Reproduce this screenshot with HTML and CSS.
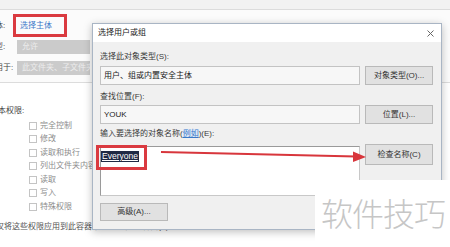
FILE: index.html
```html
<!DOCTYPE html>
<html lang="zh-CN">
<head>
    <meta charset="UTF-8">
    <meta name="viewport" content="width=device-width, initial-scale=1.0">
    <title>选择用户或组</title>
    <link rel="stylesheet" href="styles.css">
</head>
<body>
    <div class="page">
        <div class="topbar"></div>
        <div class="props">
            <div class="prop">
                <span class="prop-label">主体:</span>
                <a class="link">选择主体</a>
            </div>
            <div class="prop">
                <span class="prop-label">类型:</span>
                <span class="combo">允许</span>
            </div>
            <div class="prop">
                <span class="prop-label">应用于:</span>
                <span class="combo">此文件夹、子文件夹和文件</span>
            </div>
        </div>
        <div class="perms">
            <div class="perms-title">基本权限:</div>
            <ul class="checks">
                <li><span class="box"></span>完全控制</li>
                <li><span class="box"></span>修改</li>
                <li><span class="box"></span>读取和执行</li>
                <li><span class="box"></span>列出文件夹内容</li>
                <li><span class="box"></span>读取</li>
                <li><span class="box"></span>写入</li>
                <li><span class="box"></span>特殊权限</li>
            </ul>
            <div class="apply">仅将这些权限应用到此容器中的对象和/或容器(T)</div>
        </div>
    </div>

    <div class="dialog">
        <div class="dialog-title">
            <span>选择用户或组</span>
            <svg class="close" width="7" height="7" viewBox="0 0 7 7">
                <path d="M0.5 0.5 L6.5 6.5 M6.5 0.5 L0.5 6.5" stroke="#666" stroke-width="1"/>
            </svg>
        </div>
        <div class="dialog-body">
            <div class="field-label first">选择此对象类型(S):</div>
            <div class="field-row">
                <div class="field">用户、组或内置安全主体</div>
                <div class="btn">对象类型(O)...</div>
            </div>
            <div class="field-label second">查找位置(F):</div>
            <div class="field-row">
                <div class="field">YOUK</div>
                <div class="btn">位置(L)...</div>
            </div>
            <div class="field-label third">输入要选择的对象名称(<span class="example">例如</span>)(E):</div>
            <div class="field-row names-row">
                <div class="names"><span class="picked">Everyone</span></div>
                <div class="btn check-btn">检查名称(C)</div>
            </div>
            <div class="dialog-foot">
                <div class="btn advanced">高级(A)...</div>
            </div>
        </div>
    </div>

    <div class="mark">软件技巧</div>

    <div class="callout callout-link"></div>
    <div class="callout callout-name"></div>
    <svg class="arrow" width="450" height="247" viewBox="0 0 450 247">
        <path d="M161 152 L356 156.5" stroke="#d8363c" stroke-width="2.2" fill="none"/>
        <polygon points="353,151.5 366,157 353,162" fill="#d8363c"/>
    </svg>
</body>
</html>
```

FILE: styles.css
```css
html, body {
    margin: 0;
    padding: 0;
}
body {
    width: 450px;
    height: 247px;
    overflow: hidden;
    position: relative;
    background-color: #ffffff;
    font-family: "Liberation Sans", "Noto Sans CJK SC", sans-serif;
    font-size: 8px;
    line-height: 10px;
    color: #3a3a3a;
}

/* background window: advanced security settings */
.page {
    height: 247px;
}
.topbar {
    height: 9px;
    background-color: #f2f2f2;
    border-bottom: 1px solid #dcdcdc;
}
.props {
    display: flex;
    flex-direction: column;
    gap: 7px;
    padding: 9px 0 7px;
    margin-left: -13px;
    border-bottom: 1px solid #dcdcdc;
    background-color: #fbfbfb;
}
.prop {
    display: flex;
    align-items: center;
    height: 14px;
}
.prop-label {
    width: 30px;
    flex: none;
    color: #444;
    white-space: nowrap;
}
.link {
    color: #3b79c9;
    margin-left: 3px;
}
.combo {
    width: 73px;
    height: 14px;
    line-height: 14px;
    background-color: #cbcbcb;
    color: #ededed;
    padding-left: 5px;
    box-sizing: border-box;
    white-space: nowrap;
    overflow: hidden;
}
.perms {
    padding-top: 23px;
}
.perms-title {
    margin-left: -10px;
    color: #444;
}
.checks {
    list-style: none;
    margin: 3px 0 0;
    padding: 0 0 0 29px;
}
.checks li {
    display: flex;
    align-items: center;
    gap: 3px;
    height: 13.5px;
    color: #8c8c8c;
    white-space: nowrap;
}
.box {
    width: 6px;
    height: 6px;
    border: 1px solid #c4c4c4;
    background-color: #fff;
}
.apply {
    margin: 8px 0 0 -4px;
    color: #555;
    white-space: nowrap;
}

/* dialog window on top */
.dialog {
    position: absolute;
    left: 92px;
    top: 23px;
    width: 350px;
    height: 207px;
    box-sizing: border-box;
    border: 1px solid #a9b5c4;
    background-color: #f0f0f0;
    box-shadow: 0 2px 8px rgba(0,0,0,0.25);
    display: flex;
    flex-direction: column;
}
.dialog-title {
    height: 19px;
    background-color: #fff;
    display: flex;
    align-items: center;
    justify-content: space-between;
    padding: 0 7px 0 5px;
    color: #222;
}
.dialog-body {
    flex: 1;
    padding: 10px 8px 8px 7px;
    display: flex;
    flex-direction: column;
}
.field-label {
    height: 10px;
    white-space: nowrap;
}
.field-label.first { margin-bottom: 4px; }
.field-label.second { margin-top: 7px; margin-bottom: 3px; }
.field-label.third { margin-top: 5px; margin-bottom: 7px; }
.example {
    color: #3b79c9;
    background-color: #dce8f6;
    text-decoration: underline;
}
.field-row {
    display: flex;
    gap: 5px;
    height: 19px;
}
.field {
    flex: 1;
    box-sizing: border-box;
    border: 1px solid #c3c3c3;
    background-color: #f7f7f7;
    padding-left: 3px;
    line-height: 17px;
    color: #222;
}
.btn {
    width: 68px;
    flex: none;
    box-sizing: border-box;
    border: 1px solid #b9b9b9;
    background-color: #e1e1e1;
    text-align: center;
    line-height: 17px;
    color: #333;
    white-space: nowrap;
}
.names-row {
    height: 50px;
}
.names {
    flex: 1;
    box-sizing: border-box;
    border: 1px solid #9a9a9a;
    border-right-color: #c8c8c8;
    border-bottom-color: #c8c8c8;
    background-color: #fff;
    padding: 4px 0 0 0;
}
.picked {
    display: inline-block;
    background-color: #1f2a44;
    color: #fff;
    font-size: 8.5px;
    line-height: 11px;
    text-decoration: underline;
    padding: 0 1px;
}
.check-btn {
    height: 21px;
    margin-top: -2px;
    line-height: 19px;
}
.dialog-foot {
    margin-top: 7px;
}
.advanced {
    height: 18px;
    line-height: 16px;
}

/* watermark */
.mark {
    position: absolute;
    left: 315px;
    top: 180px;
    right: 0;
    bottom: 0;
    background-color: #fff;
    padding: 16px 0 0 6px;
    font-family: "Noto Sans CJK SC", sans-serif;
    font-weight: 300;
    font-size: 32px;
    line-height: 32px;
    letter-spacing: -1px;
    color: #c6c6c6;
    white-space: nowrap;
}

/* red annotations */
.callout {
    position: absolute;
    border: 3px solid #da3a40;
    box-sizing: border-box;
}
.callout-link {
    left: 13px;
    top: 14px;
    width: 54px;
    height: 23px;
}
.callout-name {
    left: 96px;
    top: 145px;
    width: 51px;
    height: 25px;
}
.arrow {
    position: absolute;
    left: 0;
    top: 0;
    pointer-events: none;
}
```
